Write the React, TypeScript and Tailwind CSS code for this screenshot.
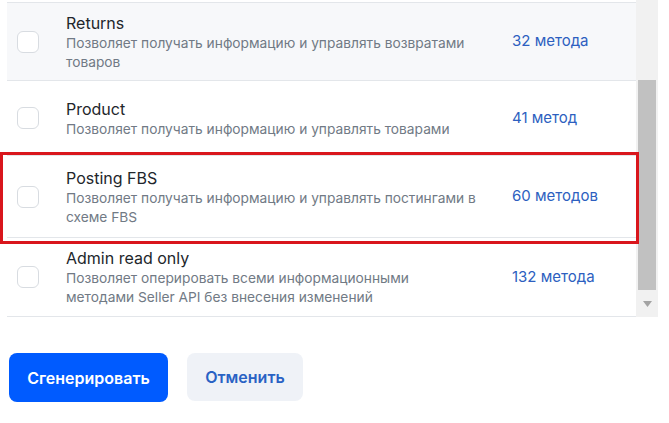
const rows = [
  {
    title: "Returns",
    desc: ["Позволяет получать информацию и управлять возвратами", "товаров"],
    count: "32 метода",
    h: "h-[78px]",
    hover: true,
  },
  {
    title: "Product",
    desc: ["Позволяет получать информацию и управлять товарами"],
    count: "41 метод",
    h: "h-[75px]",
    hover: false,
  },
  {
    title: "Posting FBS",
    desc: ["Позволяет получать информацию и управлять постингами в", "схеме FBS"],
    count: "60 методов",
    h: "h-[82px]",
    hover: false,
  },
  {
    title: "Admin read only",
    desc: ["Позволяет оперировать всеми информационными", "методами Seller API без внесения изменений"],
    count: "132 метода",
    h: "h-[79px]",
    hover: false,
  },
];

function Row(props: { row: (typeof rows)[number] }) {
  const { row } = props;
  return (
    <div
      className={`flex items-center border-b border-[#e3e6ea] ${row.h} ${row.hover ? "bg-[#f7f8fa]" : "bg-white"}`}
    >
      <div className="ml-[10px] h-[22px] w-[22px] flex-none rounded-[6px] border border-[#d8dce1] bg-white" />
      <div className="ml-[27px] w-[428px] flex-none">
        <div className="text-[16px] leading-[22px] text-[#22262b]">{row.title}</div>
        {row.desc.map((line) => (
          <div key={line} className="whitespace-nowrap text-[13.75px] leading-[19px] text-[#717a85]">
            {line}
          </div>
        ))}
      </div>
      <div className="ml-[18px] text-[15px] text-[#2d5fc0]">{row.count}</div>
    </div>
  );
}

function Scrollbar() {
  return (
    <div className="flex w-[22px] flex-none flex-col bg-[#f1f1f1]">
      <div className="h-[80px]" />
      <div className="mx-[2px] h-[210px] bg-[#c1c1c1]" />
      <div className="flex flex-1 items-center justify-center">
        <svg width="9" height="6" viewBox="0 0 9 6">
          <path d="M0 0 L9 0 L4.5 6 Z" fill="#a3a3a3" />
        </svg>
      </div>
    </div>
  );
}

export default function App() {
  return (
    <div
      className="relative h-[423px] w-[669px] overflow-hidden bg-white"
      style={{ fontFamily: "Inter, 'Noto Sans', sans-serif" }}
    >
      <div className="flex h-[317px] w-[658px]">
        <div className="flex-1 pl-[7px]">
          <div className="h-[3px] border-b border-[#e3e6ea]" />
          {rows.map((row) => (
            <Row key={row.title} row={row} />
          ))}
        </div>
        <Scrollbar />
      </div>

      <div className="flex gap-[19px] pl-[9px] pt-[36px]">
        <button className="h-[49px] w-[159px] rounded-[8px] bg-[#005bff] text-[16px] font-semibold text-white">
          Сгенерировать
        </button>
        <button className="h-[48px] w-[116px] rounded-[8px] bg-[#eff2f7] text-[16px] font-semibold text-[#2962c4]">
          Отменить
        </button>
      </div>

      <div className="pointer-events-none absolute left-0 top-[152px] h-[92px] w-[639px] border-[3px] border-[#d9161c]" />
    </div>
  );
}
